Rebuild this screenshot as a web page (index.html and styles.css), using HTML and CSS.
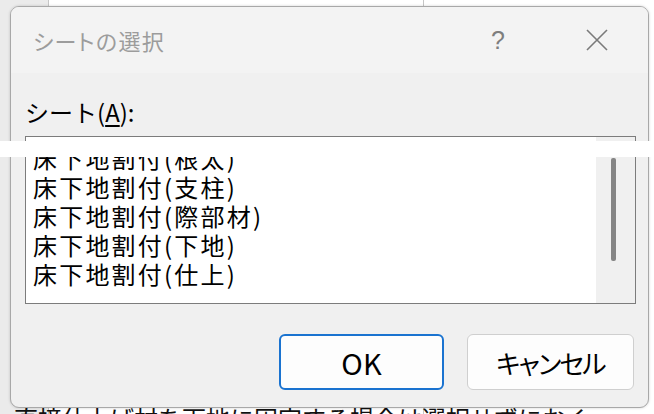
FILE: index.html
```html
<!DOCTYPE html>
<html lang="ja">
<head>
<meta charset="utf-8">
<title>シートの選択</title>
<link rel="stylesheet" href="styles.css">
</head>
<body>
<div class="desk">
  <div class="sheet">
    <div class="row-head"></div>
    <div class="col-line col-a"></div>
    <div class="col-line col-b"></div>
    <div class="sheet-text">直接仕上げ材を下地に固定する場合は選択せずにおく</div>
  </div>

  <div class="dialog">
    <div class="titlebar">
      <div class="title">シートの選択</div>
      <div class="help">?</div>
      <div class="close">
        <svg width="24" height="24" viewBox="0 0 24 24"><path d="M2 2 L22 22 M22 2 L2 22" stroke="#7a7a7a" stroke-width="1.6" fill="none"/></svg>
      </div>
    </div>
    <div class="content">
      <div class="label">シート(<u>A</u>):</div>
      <div class="listbox">
        <ul class="items">
          <li>床下地割付(根太)</li>
          <li>床下地割付(支柱)</li>
          <li>床下地割付(際部材)</li>
          <li>床下地割付(下地)</li>
          <li>床下地割付(仕上)</li>
        </ul>
        <div class="track"><div class="thumb"></div></div>
      </div>
      <div class="buttons">
        <button class="btn btn-ok">OK</button>
        <button class="btn btn-cancel">キャンセル</button>
      </div>
    </div>
  </div>

  <div class="band"></div>
</div>
</body>
</html>
```

FILE: styles.css
```css
* { box-sizing: border-box; }
html, body { margin: 0; padding: 0; }
body {
  font-family: "Noto Sans CJK JP", "Noto Sans", sans-serif;
  background: #ffffff;
}
.desk {
  position: relative;
  width: 654px;
  height: 414px;
  overflow: hidden;
  background: #ffffff;
}
.sheet { position: absolute; inset: 0; }
.row-head {
  position: absolute;
  left: 0; top: 0;
  width: 48px; height: 414px;
  background: #ebebeb;
}
.col-line {
  position: absolute;
  top: 0;
  width: 1px; height: 414px;
  background: #c6c6c6;
}
.col-a { left: 48px; }
.col-b { left: 423px; }
.sheet-text {
  position: absolute;
  left: 14px; top: 406px;
  font-size: 24px;
  line-height: 24px;
  color: #111;
  white-space: nowrap;
}

.dialog {
  position: absolute;
  left: 10px; top: 6px;
  width: 639px; height: 402px;
  border: 1px solid #a8a8a8;
  border-radius: 9px;
  background: #f0f0f0;
  overflow: hidden;
  box-shadow: 0 0 3px rgba(0,0,0,0.18);
}
.titlebar {
  height: 66px;
  background: #f3f3f3;
  display: flex;
  align-items: center;
  padding-left: 22px;
}
.title {
  flex: 1;
  font-size: 22px;
  color: #9c9c9c;
  font-feature-settings: "palt";
  letter-spacing: 1.3px;
}
.help {
  width: 30px;
  text-align: center;
  font-family: "Liberation Sans", sans-serif;
  font-size: 25px;
  color: #7e7e7e;
  margin-right: 72px;
}
.close {
  width: 24px; height: 24px;
  margin-right: 39px;
  display: flex;
}
.content {
  padding: 0 12px 0 14px;
}
.label {
  margin-top: 24px;
  height: 30px;
  line-height: 30px;
  font-size: 24px;
  color: #000;
}
.label u { text-underline-offset: 3px; }
.listbox {
  margin-top: 9px;
  height: 168px;
  border: 1px solid #7c7c7c;
  background: #ffffff;
  display: flex;
}
.items {
  flex: 1;
  list-style: none;
  margin: 0;
  padding: 6px 0 0 7px;
  overflow: hidden;
}
.items li {
  height: 29px;
  line-height: 29px;
  font-size: 24px;
  letter-spacing: 2.2px;
  color: #000;
  white-space: nowrap;
}
.track {
  width: 39px;
  background: #f0f0f0;
  padding: 21px 0 0 15px;
}
.thumb {
  width: 5px;
  height: 103px;
  border-radius: 2px;
  background: #858585;
}
.buttons {
  margin-top: 30px;
  margin-right: 2px;
  display: flex;
  justify-content: flex-end;
  gap: 23px;
}
.btn {
  height: 56px;
  background: #fdfdfd;
  border-radius: 6px;
  font-family: "Noto Sans CJK JP", "Noto Sans", sans-serif;
  color: #000;
  padding: 0;
  font-feature-settings: "palt";
}
.btn-ok {
  width: 165px;
  border: 2px solid #1a73d0;
  font-size: 29px;
}
.btn-cancel {
  width: 167px;
  border: 1px solid #cfcfcf;
  font-size: 26px;
  letter-spacing: -1.8px;
}
.band {
  position: absolute;
  left: 0; top: 141px;
  width: 654px; height: 16px;
  background: #ffffff;
}
```
